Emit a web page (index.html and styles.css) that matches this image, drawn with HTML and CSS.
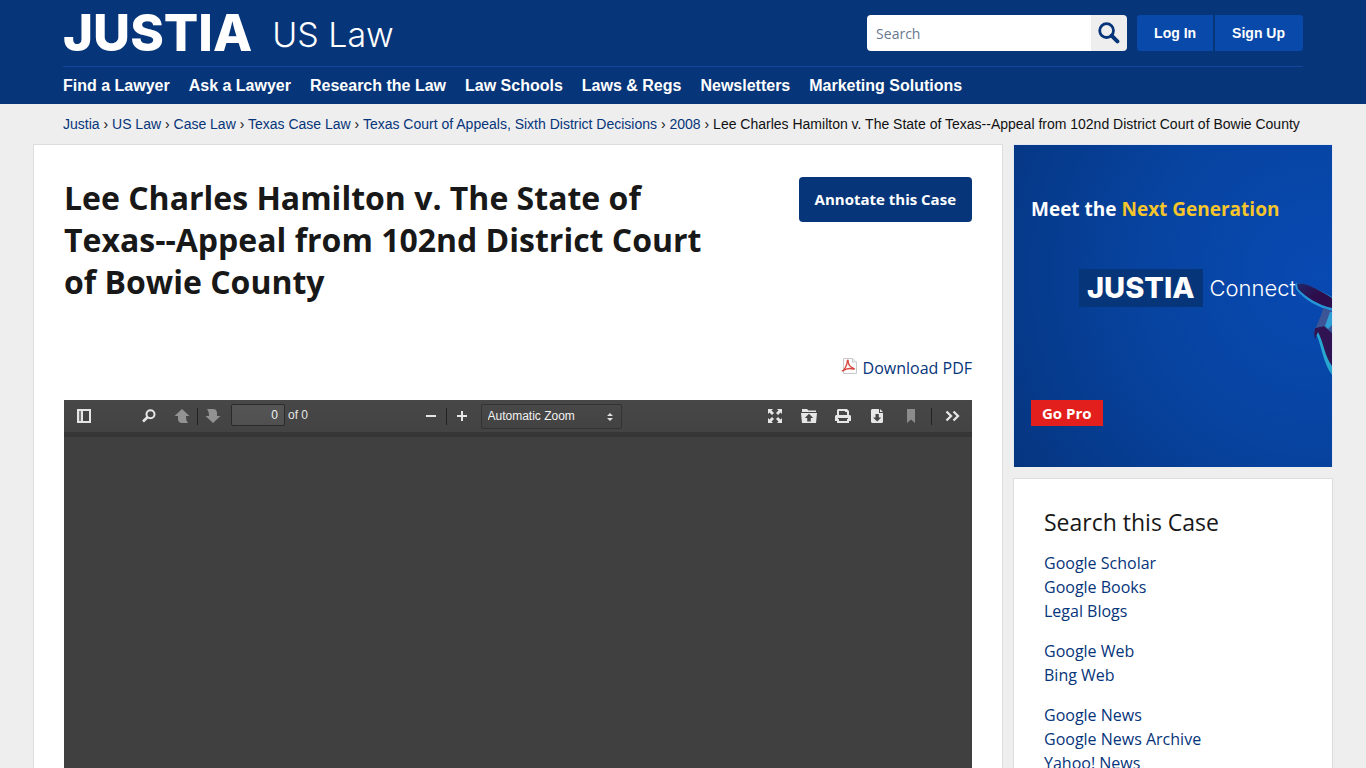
FILE: index.html
```html
<!DOCTYPE html>
<html lang="en">
<head>
<meta charset="utf-8">
<meta name="viewport" content="width=device-width, initial-scale=1">
<title>Lee Charles Hamilton v. The State of Texas--Appeal from 102nd District Court of Bowie County</title>
<link rel="stylesheet" href="styles.css">
</head>
<body>
<header class="site-header">
  <div class="header-inner">
    <div class="header-top">
      <a class="logo" href="#"><span class="logo-name">JUSTIA</span><span class="logo-area">US Law</span></a>
      <div class="header-tools">
        <form class="search" role="search">
          <input class="search-input" type="search" placeholder="Search" aria-label="Search">
          <button class="search-button" type="button" aria-label="Search">
            <svg width="22" height="22" viewBox="0 0 22 22" fill="none" stroke="#06357a"><circle cx="8.6" cy="8.6" r="6.9" stroke-width="2.8"/><path d="M13.6 13.6l5.8 5.8" stroke-width="4" stroke-linecap="round"/></svg>
          </button>
        </form>
        <div class="account">
          <a class="account-link account-login" href="#">Log In</a>
          <a class="account-link account-signup" href="#">Sign Up</a>
        </div>
      </div>
    </div>
    <nav class="main-nav" aria-label="Main">
      <a href="#">Find a Lawyer</a>
      <a href="#">Ask a Lawyer</a>
      <a href="#">Research the Law</a>
      <a href="#">Law Schools</a>
      <a href="#">Laws &amp; Regs</a>
      <a href="#">Newsletters</a>
      <a href="#">Marketing Solutions</a>
    </nav>
  </div>
</header>

<nav class="breadcrumbs" aria-label="Breadcrumb">
  <a href="#">Justia</a> › <a href="#">US Law</a> › <a href="#">Case Law</a> › <a href="#">Texas Case Law</a> › <a href="#">Texas Court of Appeals, Sixth District Decisions</a> › <a href="#">2008</a> › <span>Lee Charles Hamilton v. The State of Texas--Appeal from 102nd District Court of Bowie County</span>
</nav>

<div class="page">
  <main class="case">
    <div class="case-head">
      <h1 class="case-title">Lee Charles Hamilton v. The State of Texas--Appeal from 102nd District Court of Bowie County</h1>
      <a class="annotate" href="#">Annotate this Case</a>
    </div>
    <a class="download" href="#">
      <svg class="download-icon" width="16" height="16" viewBox="0 0 16 16" fill="none"><path d="M2.500.5h9l4 3.500v11.500h-13z" fill="#fdfdfd" stroke="#c9c9cc"/><path d="M11.500.5v3.500h4" fill="#eee" stroke="#c9c9cc"/><path d="M.8 13.200C3 12.500 6 8 6.300 3.200 6.300 1.800 7.400 2 7.200 3.300 7 6.500 9.500 9.500 12.700 10.300 13.700 10.600 13.500 11.300 12.500 11.100 9 10 5 10.500 1.700 12.900" stroke="#d8483f" stroke-width="1.300"/></svg>
      <span>Download PDF</span>
    </a>
    <section class="viewer" aria-label="PDF viewer">
      <div class="toolbar">
        <div class="tools tools-left">
          <button class="tool tool-sidebar" type="button" aria-label="Toggle sidebar"><svg width="16" height="16" viewBox="0 0 16 16"><path fill="#e6e6e6" fill-rule="evenodd" d="M1 1h14v14H1zM7 3v10h6V3z"/><path fill="#777" d="M3 3h2v10H3z"/></svg></button>
          <button class="tool tool-find" type="button" aria-label="Find"><svg width="16" height="16" viewBox="0 0 16 16" fill="none" stroke="#e6e6e6"><circle cx="9.500" cy="6.300" r="4" stroke-width="2"/><path d="M6.500 9.300L2 13.500" stroke-width="2.600"/></svg></button>
          <button class="tool" type="button" aria-label="Previous page"><svg width="16" height="16" viewBox="0 0 16 16"><path fill="#929292" d="M8 1l7.500 7H12c0 3 .3 4.500 2 7H8C5.500 15 4 13.500 4 11V8H.5z"/></svg></button>
          <span class="divider"></span>
          <button class="tool" type="button" aria-label="Next page"><svg width="16" height="16" viewBox="0 0 16 16"><path fill="#929292" d="M8 15L.5 8H4c0-3-.3-4.500-2-7h6c2.500 0 4 1.500 4 4v3h3.500z"/></svg></button>
          <input class="page-number" type="text" value="0" aria-label="Page">
          <span class="page-total">of 0</span>
        </div>
        <div class="tools tools-zoom">
          <button class="tool" type="button" aria-label="Zoom out"><svg width="16" height="16" viewBox="0 0 16 16"><path fill="#e6e6e6" d="M3 7h10v2H3z"/></svg></button>
          <span class="divider"></span>
          <button class="tool" type="button" aria-label="Zoom in"><svg width="16" height="16" viewBox="0 0 16 16"><path fill="#e6e6e6" d="M7 3h2v4h4v2H9v4H7V9H3V7h4z"/></svg></button>
          <span class="zoom-box">
            <select class="zoom-select" aria-label="Zoom"><option>Automatic Zoom</option></select>
            <svg class="zoom-arrows" width="6" height="8" viewBox="0 0 6 8" fill="#e0e0e0"><path d="M0 3h6L3 0zM0 5h6L3 8z"/></svg>
          </span>
        </div>
        <div class="tools tools-right">
          <button class="tool" type="button" aria-label="Presentation mode"><svg width="16" height="16" viewBox="0 0 16 16" fill="#e6e6e6"><path d="M1 1h5L4.500 2.500 7 5 5 7 2.500 4.500 1 6zM15 1v5l-1.500-1.500L11 7 9 5l2.500-2.500L10 1zM1 15v-5l1.500 1.500L5 9l2 2-2.500 2.500L6 15zM15 15h-5l1.500-1.500L9 11l2-2 2.500 2.500L15 10z"/></svg></button>
          <button class="tool" type="button" aria-label="Open file"><svg width="16" height="16" viewBox="0 0 16 16" fill="#e6e6e6"><path d="M1 1h5l1.500 1.500H15V4H1z"/><path fill-rule="evenodd" d="M0 5h16l-1 10H1zM8 5.700L3.800 10H6.200v3.500h3.600V10h2.400z"/></svg></button>
          <button class="tool" type="button" aria-label="Print"><svg width="16" height="16" viewBox="0 0 16 16" fill="#e6e6e6"><path fill-rule="evenodd" d="M3 1h9l2 2v4h1l1 1v5h-2v2H2v-2H0V8l1-1h1V2zM4 3v4h8V4h-2V3zM3 10v1h1v2h8v-2h1v-1z"/></svg></button>
          <button class="tool" type="button" aria-label="Download"><svg width="16" height="16" viewBox="0 0 16 16" fill="#e6e6e6"><path fill-rule="evenodd" d="M2 2l1-1h7v4h4v9l-1 1H3l-1-1zM6.500 6v3.500H4L8.200 13.500 12.300 9.500H9.800V6z"/><path d="M11 1l3 3h-3z"/></svg></button>
          <button class="tool" type="button" aria-label="Bookmark"><svg width="16" height="16" viewBox="0 0 16 16"><path fill="#8c8c8c" d="M4 1h8v14l-4-3.500L4 15z"/></svg></button>
          <span class="divider"></span>
          <button class="tool" type="button" aria-label="Tools"><svg width="16" height="16" viewBox="0 0 16 16" fill="none" stroke="#e6e6e6" stroke-width="2.300"><path d="M1.500 3.500L6 8l-4.500 4.500M8.500 3.500L13 8l-4.500 4.500"/></svg></button>
        </div>
      </div>
      <div class="viewer-pages"></div>
    </section>
  </main>

  <aside class="sidebar">
    <a class="promo" href="#">
      <svg class="promo-hand" width="38" height="94" viewBox="0 0 38 94">
        <defs><linearGradient id="finger" x1="0" y1="0" x2="1" y2="1"><stop offset="0" stop-color="#20276b"/><stop offset=".5" stop-color="#2d0d4b"/></linearGradient></defs>
        <path d="M1 1C8-1 20 4 38 14V28C24 24 10 17 2 6z" fill="#2596d8"/>
        <path d="M3 1C10-1 20 4 38 15V25C24 22 12 14 4 6z" fill="url(#finger)"/>
        <path d="M29 25L38 28V50L30 44 22 45C24 38 28 32 29 25z" fill="#3c5597"/>
        <path d="M36 29L38 29V42L34 46 31 43z" fill="#2f9ed4"/>
        <path d="M21 45L30 43 38 50V92C30 82 27 62 23 53L20 51z" fill="#27a6cf"/>
        <path d="M21 45L30 43 38 50V83C31 74 29 58 24 49L21 56 20 50z" fill="#301353"/>
      </svg>
      <span class="promo-title">Meet the <strong>Next Generation</strong></span>
      <span class="promo-brand"><b>JUSTIA</b><span>Connect</span></span>
      <span class="promo-cta">Go Pro</span>
    </a>
    <section class="panel">
      <h2 class="panel-title">Search this Case</h2>
      <ul class="links">
        <li><a href="#">Google Scholar</a></li>
        <li><a href="#">Google Books</a></li>
        <li><a href="#">Legal Blogs</a></li>
      </ul>
      <ul class="links">
        <li><a href="#">Google Web</a></li>
        <li><a href="#">Bing Web</a></li>
      </ul>
      <ul class="links">
        <li><a href="#">Google News</a></li>
        <li><a href="#">Google News Archive</a></li>
        <li><a href="#">Yahoo! News</a></li>
      </ul>
    </section>
  </aside>
</div>
</body>
</html>
```
FILE: styles.css
```css
* { box-sizing: border-box; }

body {
  margin: 0;
  background: #eee;
  color: #181818;
  font-family: "Open Sans", "Noto Sans", sans-serif;
  font-size: 16px;
  line-height: 24px;
}

a { color: #06357a; text-decoration: none; }

.site-header {
  background: #06357a;
  padding: 0 30px;
  font-family: "Liberation Sans", Arial, sans-serif;
}

.header-inner { max-width: 1240px; margin: 0 auto; }

.header-top {
  display: flex;
  justify-content: space-between;
  align-items: center;
  height: 67px;
  border-bottom: 1px solid #13479b;
}

.logo {
  display: flex;
  align-items: flex-end;
  gap: 20px;
  color: #fff;
  font-family: Inter, sans-serif;
}
.logo-name { font-size: 51px; font-weight: 800; line-height: 56px; }
.logo-area { font-size: 34px; font-weight: 300; line-height: 52px; }

.header-tools { display: flex; gap: 10px; }

.search {
  display: flex;
  width: 260px;
  height: 36px;
  border-radius: 4px;
  overflow: hidden;
}
.search-input {
  flex: 1;
  min-width: 0;
  padding: 0 9px;
  border: 0;
  background: #fff;
  font: 14px "Open Sans", sans-serif;
  appearance: none;
}
.search-input::placeholder { color: #68788f; }
.search-button {
  display: flex;
  align-items: center;
  justify-content: center;
  width: 36px;
  padding: 0;
  border: 0;
  background: #eee;
}

.account { display: flex; gap: 2px; }
.account-link {
  padding: 0 17px;
  background: #0849aa;
  color: #fff;
  font-size: 14px;
  font-weight: 700;
  line-height: 36px;
}
.account-login { border-radius: 3px 0 0 3px; }
.account-signup { padding-right: 18px; border-radius: 0 3px 3px 0; }

.main-nav { display: flex; gap: 19px; padding-top: 1px; }
.main-nav a { color: #fff; font-weight: 700; line-height: 36px; }

.breadcrumbs {
  max-width: 1240px;
  margin: 0 auto;
  padding: 10px 0;
  font: 14px/20px "Liberation Sans", Arial, sans-serif;
  color: #111;
}

.page {
  display: grid;
  grid-template-columns: minmax(0, 1fr) 320px;
  gap: 10px;
  max-width: 1300px;
  margin: 0 auto;
}

.case {
  padding: 32px 30px;
  background: #fff;
  border: 1px solid #ddd;
}
.case-head {
  display: flex;
  justify-content: space-between;
  align-items: flex-start;
  gap: 80px;
}
.case-title {
  flex: 1;
  margin: 0;
  font-size: 32px;
  font-weight: 700;
  line-height: 42px;
}
.annotate {
  padding: 0 16px;
  border-radius: 4px;
  background: #06357a;
  color: #fff;
  font-size: 15px;
  font-weight: 700;
  line-height: 45px;
}

.download {
  display: flex;
  justify-content: flex-end;
  gap: 6px;
  margin: 53px 0 20px;
}
.download-icon { margin-top: 2px; }

.viewer { background: #404040; }
.toolbar {
  display: flex;
  justify-content: space-between;
  height: 37px;
  border-bottom: 5px solid #363636;
  background: linear-gradient(#474747, #434343);
  font-family: "Liberation Sans", Arial, sans-serif;
  font-size: 12px;
  color: #e6e6e6;
}
.tools { display: flex; align-items: center; }
.tool {
  display: flex;
  justify-content: center;
  width: 30px;
  padding: 0;
  border: 0;
  background: none;
}
.divider {
  width: 1px;
  height: 17px;
  background: #222;
}
.tools-left { padding-left: 5px; }
.tool-find { margin-left: 35px; margin-right: 3px; }
.page-number {
  width: 54px;
  height: 22px;
  margin: 0 3px 2px;
  padding: 0 6px;
  border: 1px solid #2a2a2a;
  border-radius: 2px;
  background: linear-gradient(#555, #505050);
  color: #f2f2f2;
  font: 12px "Liberation Sans", Arial, sans-serif;
  text-align: right;
}
.page-total { padding-bottom: 2px; }
.tools-zoom { padding-right: 31px; }
.zoom-box { position: relative; margin-left: 4px; }
.zoom-select {
  display: block;
  width: 141px;
  height: 25px;
  padding: 0 6px;
  border: 1px solid #333;
  border-radius: 2px;
  background: linear-gradient(#484848, #424242);
  color: #f2f2f2;
  font: 12px "Liberation Sans", Arial, sans-serif;
  appearance: none;
}
.zoom-arrows { position: absolute; right: 9px; top: 9px; pointer-events: none; }
.tools-right { gap: 4px; padding-right: 4px; }
.tools-right .divider { margin: 0 2px 0 1px; }
.viewer-pages { height: 600px; }

.sidebar { display: grid; gap: 11px; align-content: start; }

.promo {
  position: relative;
  display: flex;
  flex-direction: column;
  align-items: flex-start;
  height: 323px;
  padding: 49px 17px 0;
  border: 1px solid #e4e8f2;
  border-bottom: 0;
  overflow: hidden;
  background: radial-gradient(circle at 96% 40%, #0849b2, #07439f 50%, #053580);
  color: #fff;
}
.promo-title { font-size: 19px; font-weight: 700; line-height: 30px; }
.promo-title strong { color: #f5c52c; font-weight: 700; }
.promo-brand {
  display: flex;
  align-items: center;
  gap: 7px;
  margin: 45px 0 0 48px;
  font-family: Inter, sans-serif;
  font-size: 22px;
  font-weight: 300;
  line-height: 38px;
}
.promo-brand b {
  padding: 0 8px;
  background: #06357a;
  font-size: 29px;
  font-weight: 800;
}
.promo-cta {
  margin-top: 93px;
  padding: 0 11px;
  background: #e21f1d;
  font-size: 15px;
  font-weight: 700;
  line-height: 26px;
}
.promo-hand { position: absolute; right: 0; top: 138px; }

.panel {
  padding: 30px;
  background: #fff;
  border: 1px solid #ddd;
}
.panel-title {
  margin: 0 0 15px;
  font-size: 23px;
  font-weight: 400;
  line-height: 27px;
}
.links { margin: 0 0 16px; padding: 0; list-style: none; }
```
